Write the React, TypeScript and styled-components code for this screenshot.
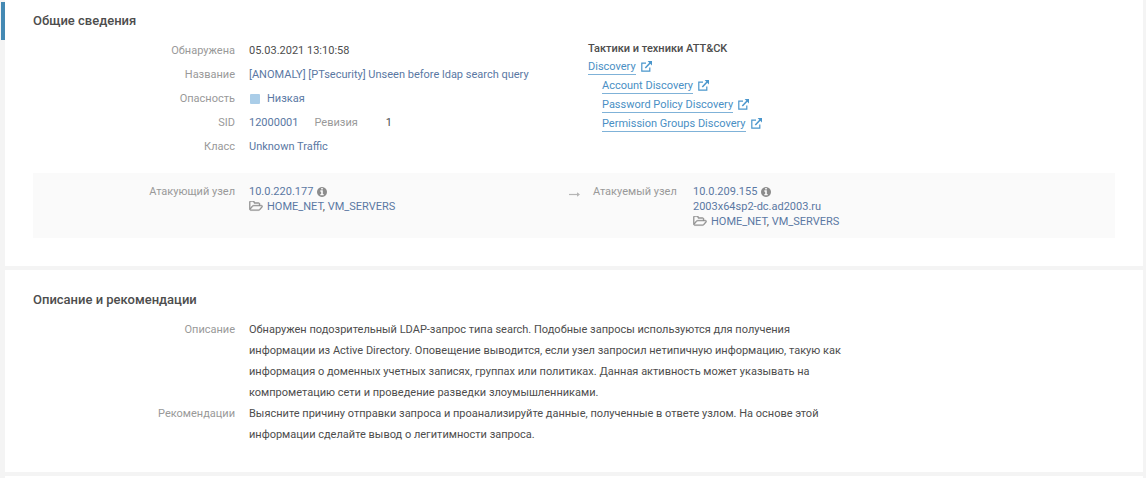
import React from "react";
import styled, { createGlobalStyle, css } from "styled-components";

const GlobalStyle = createGlobalStyle`
  * { box-sizing: border-box; }
  body {
    margin: 0;
    background: #f4f4f4;
    color: #4d4d4d;
    font-family: Roboto, "Liberation Sans", sans-serif;
    font-size: 11px;
    line-height: 16px;
  }
`;

const LABEL_WIDTH = "202px";

const Page = styled.div`
  display: flex;
  min-height: 100vh;
`;

const Rail = styled.div`
  flex: none;
  width: 5px;
  padding: 2px 0 0 1px;
`;

const RailMarker = styled.div`
  height: 38px;
  background: #4489b3;
`;

const Content = styled.main`
  flex: 1;
  min-width: 0;
  display: flex;
  flex-direction: column;
  gap: 4px;
  padding-right: 3px;
`;

const Panel = styled.section<{ $first?: boolean; $fill?: boolean }>`
  background: #fff;
  padding: ${(p) => (p.$fill ? "0" : p.$first ? "12px 28px 28px" : "21px 28px 27px")};
  ${(p) => p.$fill && css`flex: 1;`}
`;

const Heading = styled.h2`
  margin: 0;
  font-size: 13px;
  line-height: 18px;
  font-weight: 500;
`;

const Summary = styled.div`
  display: grid;
  grid-template-columns: 555fr 527fr;
  padding-top: 9px;
`;

const Fields = styled.dl<{ $roomy?: boolean }>`
  display: grid;
  grid-template-columns: ${LABEL_WIDTH} minmax(0, 1fr);
  column-gap: 14px;
  margin: 0;
  line-height: ${(p) => (p.$roomy ? "21px" : "24px")};
`;

const Label = styled.dt<{ $start?: boolean }>`
  color: #999;
  text-align: ${(p) => (p.$start ? "left" : "right")};
`;

const Value = styled.dd`
  margin: 0;
`;

const InlineValue = styled(Value)`
  display: flex;
  gap: 16px;
`;

const Revision = styled.dl`
  display: flex;
  gap: 28px;
  margin: 0;
`;

const ValueLink = styled.a`
  color: #5a78a3;
  text-decoration: none;
`;

const Severity = styled(Value)`
  display: flex;
  align-items: center;
  gap: 7px;
  padding-left: 1px;
  color: #5a78a3;
`;

const SeverityMark = styled.span`
  width: 10px;
  height: 10px;
  border-radius: 1px;
  background: #aacde8;
`;

const Tactics = styled.div`
  padding-top: 2px;
`;

const TacticsTitle = styled.h3`
  margin: 0;
  font-size: 11px;
  line-height: 16px;
  font-weight: 500;
`;

const TechniqueList = styled.ul<{ $nested?: boolean }>`
  list-style: none;
  margin: 0;
  padding: 0 0 0 ${(p) => (p.$nested ? "14px" : "0")};
`;

const TechniqueRow = styled.div`
  display: flex;
  align-items: center;
  gap: 5px;
  height: 19px;
`;

const TechniqueLink = styled.a`
  color: #4a8fc4;
  line-height: 15px;
  border-bottom: 1px solid #7fb2d8;
  text-decoration: none;
`;

const HostStrip = styled.div`
  display: grid;
  grid-template-columns: 536fr 546fr;
  margin-top: 14px;
  padding: 11px 0 9px;
  background: #fafafa;
`;

const Host = styled.div`
  display: grid;
  grid-template-columns: ${LABEL_WIDTH} minmax(0, 1fr);
  column-gap: 14px;
  line-height: 15px;
`;

const TargetHost = styled(Host)`
  grid-template-columns: 10px 86px minmax(0, 1fr);
`;

const HostLabel = styled.span<{ $start?: boolean }>`
  color: #999;
  text-align: ${(p) => (p.$start ? "left" : "right")};
`;

const HostLine = styled.div`
  display: flex;
  align-items: center;
  gap: 4px;
`;

const Description = styled.div`
  max-width: 816px;
  padding-top: 10px;
`;

const ArrowIcon = () => (
  <svg width="12" height="20" viewBox="0 0 12 20" fill="none" stroke="#b5b5b5" aria-hidden="true">
    <path d="M0 10.500H10" strokeWidth="1.200" />
    <path d="M8 8.200L11 10.500L8 12.800z" fill="#b5b5b5" stroke="none" />
  </svg>
);

const ExternalIcon = () => (
  <svg width="11" height="11" viewBox="0 0 11 11" fill="none" stroke="#4a96cc" strokeWidth="1.2" aria-hidden="true">
    <path d="M5 2.200H.8v8h8V6.500" />
    <path d="M4.300 6.900L9.300 1.700" strokeWidth="1.500" />
    <path d="M6.600.1H11v4.500z" fill="#4a96cc" stroke="none" />
  </svg>
);

const FolderIcon = () => (
  <svg
    width="14"
    height="12"
    viewBox="-40 88 2000 1616"
    fill="#8f8f8f"
    stroke="#8f8f8f"
    strokeWidth="60"
    aria-hidden="true"
  >
    <path d="M1781 803q0-35-53-35h-1088q-40 0-85.500 21.500t-71.500 52.500l-294 363q-18 24-18 40 0 35 53 35h1088q40 0 86-22t71-53l294-363q18-22 18-39zm-1141-163h768v-160q0-40-28-68t-68-28h-576q-40 0-68-28t-28-68v-64q0-40-28-68t-68-28h-320q-40 0-68 28t-28 68v853l256-315q44-53 116-87.500t140-34.500zm1269 163q0 62-46 120l-295 363q-43 53-116 87.500t-140 34.500h-1088q-92 0-158-66t-66-158v-960q0-92 66-158t158-66h320q92 0 158 66t66 158v32h544q92 0 158 66t66 158v160h192q54 0 99 24.500t67 70.500q15 32 15 68z" />
  </svg>
);

const InfoIcon = () => (
  <svg width="10" height="10" viewBox="128 128 1536 1536" fill="#8c8c8c" aria-hidden="true">
    <path d="M1152 1376v-160q0-14-9-23t-23-9h-96v-512q0-14-9-23t-23-9h-320q-14 0-23 9t-9 23v160q0 14 9 23t23 9h96v320h-96q-14 0-23 9t-9 23v160q0 14 9 23t23 9h448q14 0 23-9t9-23zm-128-896v-160q0-14-9-23t-23-9h-192q-14 0-23 9t-9 23v160q0 14 9 23t23 9h192q14 0 23-9t9-23zm640 416q0 209-103 385.500t-279.500 279.500-385.500 103-385.500-103-279.500-279.500-103-385.500 103-385.500 279.500-279.500 385.500-103 385.500 103 279.500 279.500 103 385.500z" />
  </svg>
);

const Technique = ({ name }: { name: string }) => (
  <TechniqueRow>
    <TechniqueLink href="#">{name}</TechniqueLink>
    <ExternalIcon />
  </TechniqueRow>
);

const HostDetails = ({ ip, name }: { ip: string; name?: string }) => (
  <div>
    <HostLine>
      <ValueLink href="#">{ip}</ValueLink>
      <InfoIcon />
    </HostLine>
    {name && (
      <HostLine>
        <ValueLink href="#">{name}</ValueLink>
      </HostLine>
    )}
    <HostLine>
      <FolderIcon />
      <span>
        <ValueLink href="#">HOME_NET</ValueLink>, <ValueLink href="#">VM_SERVERS</ValueLink>
      </span>
    </HostLine>
  </div>
);

const techniques = ["Account Discovery", "Password Policy Discovery", "Permission Groups Discovery"];

export default function App() {
  return (
    <Page>
      <GlobalStyle />
      <Rail>
        <RailMarker />
      </Rail>
      <Content>
        <Panel $first>
          <Heading>Общие сведения</Heading>
          <Summary>
            <Fields>
              <Label>Обнаружена</Label>
              <Value>05.03.2021 13:10:58</Value>
              <Label>Название</Label>
              <Value>
                <ValueLink href="#">[ANOMALY] [PTsecurity] Unseen before ldap search query</ValueLink>
              </Value>
              <Label>Опасность</Label>
              <Severity>
                <SeverityMark />
                Низкая
              </Severity>
              <Label>SID</Label>
              <InlineValue>
                <ValueLink href="#">12000001</ValueLink>
                <Revision>
                  <Label $start>Ревизия</Label>
                  <Value>1</Value>
                </Revision>
              </InlineValue>
              <Label>Класс</Label>
              <Value>
                <ValueLink href="#">Unknown Traffic</ValueLink>
              </Value>
            </Fields>
            <Tactics>
              <TacticsTitle>Тактики и техники ATT&amp;CK</TacticsTitle>
              <TechniqueList>
                <li>
                  <Technique name="Discovery" />
                  <TechniqueList $nested>
                    {techniques.map((name) => (
                      <li key={name}>
                        <Technique name={name} />
                      </li>
                    ))}
                  </TechniqueList>
                </li>
              </TechniqueList>
            </Tactics>
          </Summary>
          <HostStrip>
            <Host>
              <HostLabel>Атакующий узел</HostLabel>
              <HostDetails ip="10.0.220.177" />
            </Host>
            <TargetHost>
              <ArrowIcon />
              <HostLabel $start>Атакуемый узел</HostLabel>
              <HostDetails ip="10.0.209.155" name="2003x64sp2-dc.ad2003.ru" />
            </TargetHost>
          </HostStrip>
        </Panel>
        <Panel>
          <Heading>Описание и рекомендации</Heading>
          <Description>
            <Fields $roomy>
              <Label>Описание</Label>
              <Value>
                Обнаружен подозрительный LDAP-запрос типа search. Подобные запросы используются для получения
                информации из Active Directory. Оповещение выводится, если узел запросил нетипичную информацию, такую
                как информация о доменных учетных записях, группах или политиках. Данная активность может указывать на
                компрометацию сети и проведение разведки злоумышленниками.
              </Value>
              <Label>Рекомендации</Label>
              <Value>
                Выясните причину отправки запроса и проанализируйте данные, полученные в ответе узлом. На основе этой
                информации сделайте вывод о легитимности запроса.
              </Value>
            </Fields>
          </Description>
        </Panel>
        <Panel $fill />
      </Content>
    </Page>
  );
}
